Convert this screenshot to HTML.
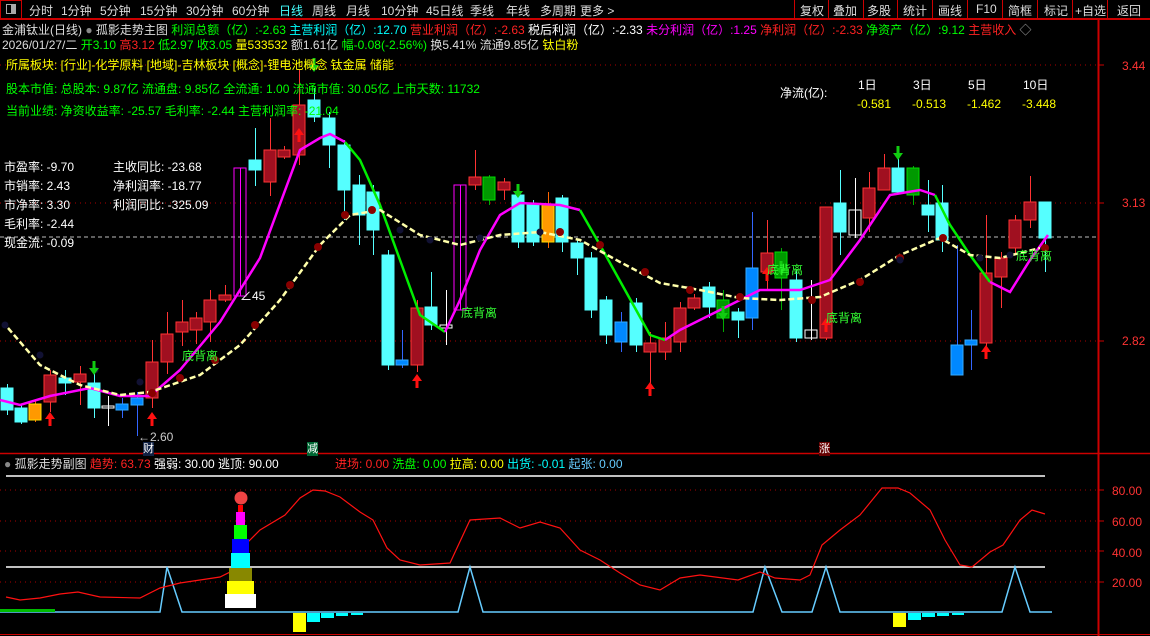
<!DOCTYPE html>
<html><head><meta charset="utf-8"><style>
*{margin:0;padding:0;box-sizing:border-box}
body{width:1150px;height:636px;background:#000;overflow:hidden;position:relative;font-family:"Liberation Sans","Noto Sans CJK SC",sans-serif;font-size:12px;color:#ddd}
.t{position:absolute;white-space:nowrap;line-height:14px}
#top{position:absolute;left:0;top:0;width:1150px;height:19px;border-bottom:1px solid #c00}
#top span{position:absolute;top:2px;font-size:12px;color:#ddd}
.sep{position:absolute;top:0;width:1px;height:19px;background:#c00}
svg{position:absolute;left:0;top:0}
</style></head><body>
<div id="top">
<div style="position:absolute;left:0;top:0;width:22px;height:19px;border:1px solid #c00"></div>
<div style="position:absolute;left:6px;top:4px;width:10px;height:10px;border:1px solid #aaa;background:linear-gradient(90deg,#000 50%,#aaa 50%)"></div>
<span style="left:29px">分时</span><span style="left:61px">1分钟</span><span style="left:100px">5分钟</span><span style="left:140px">15分钟</span><span style="left:186px">30分钟</span><span style="left:232px">60分钟</span><span style="left:279px;color:#4ff">日线</span><span style="left:312px">周线</span><span style="left:346px">月线</span><span style="left:381px">10分钟</span><span style="left:426px">45日线</span><span style="left:470px">季线</span><span style="left:506px">年线</span><span style="left:540px">多周期</span><span style="left:580px">更多 &gt;</span>
<div class="sep" style="left:794px"></div><span style="left:800px">复权</span>
<div class="sep" style="left:828px"></div><span style="left:833px">叠加</span>
<div class="sep" style="left:863px"></div><span style="left:867px">多股</span>
<div class="sep" style="left:897px"></div><span style="left:903px">统计</span>
<div class="sep" style="left:932px"></div><span style="left:938px">画线</span>
<div class="sep" style="left:967px"></div><span style="left:976px">F10</span>
<div class="sep" style="left:1002px"></div><span style="left:1008px">简框</span>
<div class="sep" style="left:1037px"></div><span style="left:1044px">标记</span>
<div class="sep" style="left:1072px"></div><span style="left:1075px">+自选</span>
<div class="sep" style="left:1107px"></div><span style="left:1117px">返回</span>
</div>
<svg width="1150" height="636" id="s"></svg>
<div class="t" style="left:2px;top:23px;color:#ddd">金浦钛业(日线) <span style="color:#888">●</span> 孤影走势主图 <span style="color:#0f0">利润总额（亿）:-2.63</span> <span style="color:#0ff">主营利润（亿）:12.70</span> <span style="color:#f22">营业利润（亿）:-2.63</span> <span style="color:#fff">税后利润（亿）:-2.33</span> <span style="color:#f0f">未分利润（亿）:1.25</span> <span style="color:#f22">净利润（亿）:-2.33</span> <span style="color:#0f0">净资产（亿）:9.12</span> <span style="color:#f22">主营收入</span> <span style="color:#aaa">◇</span></div>
<div class="t" style="left:2px;top:38px;color:#ddd">2026/01/27/二 <span style="color:#0f0">开3.10</span> <span style="color:#f22">高3.12</span> <span style="color:#0f0">低2.97</span> <span style="color:#0f0">收3.05</span> <span style="color:#ff0">量533532</span> 额1.61亿 <span style="color:#0f0">幅-0.08(-2.56%)</span> 换5.41% 流通9.85亿 <span style="color:#ff0">钛白粉</span></div>
<div class="t" style="left:6px;top:58px;color:#ff0">所属板块: [行业]-化学原料 [地域]-吉林板块 [概念]-锂电池概念 钛金属 储能</div>
<div class="t" style="left:6px;top:82px;color:#0f0">股本市值: 总股本: 9.87亿 流通盘: 9.85亿 全流通: 1.00 流通市值: 30.05亿 上市天数: 11732</div>
<div class="t" style="left:6px;top:104px;color:#0f0">当前业绩: 净资收益率: -25.57 毛利率: -2.44 主营利润率: -21.04</div>
<div class="t" style="left:4px;top:158px;color:#fff;line-height:19px">市盈率: -9.70<br>市销率: 2.43<br>市净率: 3.30<br>毛利率: -2.44<br>现金流: -0.09</div>
<div class="t" style="left:113px;top:158px;color:#fff;line-height:19px">主收同比: -23.68<br>净利润率: -18.77<br>利润同比: -325.09</div>
<div class="t" style="left:780px;top:86px;color:#fff">净流(亿):</div>
<div class="t" style="left:858px;top:78px;color:#fff">1日</div><div class="t" style="left:913px;top:78px;color:#fff">3日</div><div class="t" style="left:968px;top:78px;color:#fff">5日</div><div class="t" style="left:1023px;top:78px;color:#fff">10日</div>
<div class="t" style="left:857px;top:97px;color:#ff0">-0.581</div><div class="t" style="left:912px;top:97px;color:#ff0">-0.513</div><div class="t" style="left:967px;top:97px;color:#ff0">-1.462</div><div class="t" style="left:1022px;top:97px;color:#ff0">-3.448</div>
<div class="t" style="left:1122px;top:59px;color:#f33">3.44</div>
<div class="t" style="left:1122px;top:196px;color:#f33">3.13</div>
<div class="t" style="left:1122px;top:334px;color:#f33">2.82</div>
<div class="t" style="left:4px;top:457px;color:#ddd"><span style="color:#888">●</span> 孤影走势副图 <span style="color:#f22">趋势: 63.73</span> <span style="color:#fff">强弱: 30.00 逃顶: 90.00</span></div>
<div class="t" style="left:335px;top:457px"><span style="color:#f22">进场: 0.00</span> <span style="color:#0f0">洗盘: 0.00</span> <span style="color:#ff0">拉高: 0.00</span> <span style="color:#0ff">出货: -0.01</span> <span style="color:#6cf">起张: 0.00</span></div>
<div class="t" style="left:1112px;top:484px;color:#f33">80.00</div>
<div class="t" style="left:1112px;top:515px;color:#f33">60.00</div>
<div class="t" style="left:1112px;top:546px;color:#f33">40.00</div>
<div class="t" style="left:1112px;top:576px;color:#f33">20.00</div>
<div class="t" style="left:182px;top:349px;color:#3f3">底背离</div>
<div class="t" style="left:461px;top:306px;color:#3f3">底背离</div>
<div class="t" style="left:767px;top:263px;color:#3f3">底背离</div>
<div class="t" style="left:826px;top:311px;color:#3f3">底背离</div>
<div class="t" style="left:1016px;top:249px;color:#3f3">底背离</div>
<div class="t" style="left:240px;top:289px;color:#fff">∠45</div>
<div class="t" style="left:138px;top:430px;color:#ccc">←2.60</div>
<div class="t" style="left:143px;top:442px;color:#fff;background:#124;font-size:11px">财</div>
<div class="t" style="left:307px;top:442px;color:#fff;background:#063;font-size:11px">减</div>
<div class="t" style="left:819px;top:442px;color:#fff;background:#600;font-size:11px">涨</div>
<script>
var s=document.getElementById('s'),h='';
function L(x1,y1,x2,y2,c,w,d){h+='<line x1="'+x1+'" y1="'+y1+'" x2="'+x2+'" y2="'+y2+'" stroke="'+c+'" stroke-width="'+(w||1)+'"'+(d?' stroke-dasharray="'+d+'"':'')+'/>';}
function R(x,y,w,hh,f,st){h+='<rect x="'+x+'" y="'+y+'" width="'+w+'" height="'+hh+'" fill="'+f+'"'+(st?' stroke="'+st+'"':'')+'/>';}
function P(pts,c,w,d){h+='<polyline fill="none" points="'+pts+'" stroke="'+c+'" stroke-width="'+w+'"'+(d?' stroke-dasharray="'+d+'"':'')+'/>';}
L(1098.5,19,1098.5,636,'#c00',2);L(0,19.5,1150,19.5,'#c00');L(0,453.5,1150,453.5,'#c00',1.5);L(0,634.5,1150,634.5,'#c00');
L(1098,65,1104,65,'#c00');L(1098,203,1104,203,'#c00');L(1098,341,1104,341,'#c00');
L(0,65,1098,65,'#a00',1,'1,4');L(0,203,1098,203,'#a00',1,'1,4');L(0,341,1098,341,'#a00',1,'1,4');
L(0,237,1098,237,'#bbb',1,'4,3');
var C=[[7,388,410,384,415,'c'],[21,408,422,404,424,'c'],[35,404,420,400,422,'o'],[50,375,402,370,412,'r'],[65,378,383,370,395,'c'],[80,374,382,366,405,'r'],[94,383,408,370,418,'c'],[108,406,408,396,426,'w'],[122,404,410,398,418,'b'],[137,398,405,392,436,'b'],[152,362,398,340,408,'r'],[167,334,362,312,374,'r'],[182,322,332,300,346,'r'],[196,318,330,312,344,'r'],[210,300,322,290,342,'r'],[225,295,300,285,302,'r'],[240,168,296,168,296,'m'],[255,160,170,128,186,'c'],[270,150,182,118,196,'r'],[284,150,157,146,159,'r'],[299,105,155,70,165,'r'],[314,100,117,88,122,'c'],[329,118,145,112,168,'c'],[344,145,190,140,220,'c'],[359,185,215,175,245,'c'],[373,192,230,185,255,'c'],[388,255,365,250,370,'c'],[402,360,365,330,368,'b'],[417,308,365,300,372,'r'],[431,307,325,272,330,'c'],[446,325,328,290,345,'w'],[460,185,310,185,310,'m'],[475,177,185,150,190,'r'],[489,177,200,175,205,'g'],[504,182,190,178,200,'r'],[518,195,242,190,248,'c'],[533,205,242,200,246,'c'],[548,205,242,192,248,'o'],[562,198,242,195,252,'c'],[577,243,258,240,275,'c'],[591,258,310,252,318,'c'],[606,300,335,296,344,'c'],[621,322,342,312,352,'b'],[636,303,345,298,352,'c'],[650,343,352,332,385,'r'],[665,338,352,322,360,'r'],[680,308,342,302,352,'r'],[694,298,308,294,310,'r'],[709,287,307,282,318,'c'],[723,300,318,290,332,'g'],[738,312,320,308,338,'c'],[752,268,318,212,330,'b'],[767,253,272,220,290,'r'],[781,252,278,248,310,'g'],[796,280,338,270,342,'c'],[811,330,338,280,340,'w'],[826,207,338,207,340,'r'],[840,203,232,170,255,'c'],[855,210,235,178,238,'w'],[869,188,218,172,232,'r'],[884,168,190,154,190,'r'],[898,168,192,146,192,'c'],[913,168,195,166,205,'g'],[928,205,215,180,232,'c'],[942,203,240,185,252,'c'],[957,345,375,245,375,'b'],[971,340,345,310,370,'b'],[986,273,343,215,350,'r'],[1001,258,277,252,308,'r'],[1015,220,248,215,255,'r'],[1030,202,220,176,228,'r'],[1045,202,238,202,272,'c']];
var col={c:['#5ff','#5ff','#5ff'],r:['#a01020','#f33','#f33'],o:['#f90','#fd0','#f60'],b:['#08f','#3af','#36f'],g:['#090','#0d0','#0a0'],w:['none','#fff','#fff'],m:['none','#f0f','#f0f']};
C.forEach(function(k){var c=col[k[5]];L(k[0]+.5,k[3],k[0]+.5,k[4],c[2]);R(k[0]-6,k[1],12,Math.max(2,k[2]-k[1]),c[0],c[1]);});
P('0,400 20,405 50,396 90,388 120,396 150,396 180,370 220,322 260,258 300,150 320,138 330,134 345,142','#f0f',2.5);
P('345,142 360,160 380,205 400,260 420,315 445,332','#0e0',2.5);
P('445,332 460,300 480,250 500,215 520,203 560,205 580,210','#f0f',2.5);
P('580,210 600,245 625,290 650,335 665,340','#0e0',2.5);
P('665,340 680,330 720,310 760,290 800,290 830,280 860,240 890,195 920,190 935,195','#f0f',2.5);
P('935,195 950,225 970,255 990,282','#0e0',2.5);
P('990,282 1010,292 1030,260 1048,235','#f0f',2.5);
P('8,328 40,365 80,385 120,395 150,392 200,375 240,345 280,300 320,245 350,215 380,210 420,235 460,245 500,235 540,232 580,240 620,262 660,283 700,290 740,298 780,300 820,297 860,280 900,255 940,238 970,255 1000,258 1040,248','#ffa',2.5,'6,3');
[[152,393],[180,378],[215,360],[255,325],[290,285],[318,247],[345,215],[372,210],[560,232],[600,245],[645,272],[690,290],[740,297],[812,300],[860,282],[900,258],[943,238],[1045,248]].forEach(function(p){h+='<circle cx="'+p[0]+'" cy="'+p[1]+'" r="4" fill="#800"/>';});
[[5,325],[40,355],[95,370],[140,382],[400,230],[430,240],[480,238],[540,232],[900,260],[980,258],[1010,255]].forEach(function(p){h+='<circle cx="'+p[0]+'" cy="'+p[1]+'" r="3.5" fill="#113"/>';});
function up(x,y){h+='<path d="M'+x+' '+y+' l-5 7 h3.5 v7 h3 v-7 h3.5z" fill="#f11"/>';}
function dn(x,y){h+='<path d="M'+x+' '+y+' l-5 -7 h3.5 v-7 h3 v7 h3.5z" fill="#1c1"/>';}
[[50,412],[152,412],[299,128],[417,374],[650,382],[767,267],[826,318],[986,345]].forEach(function(a){up(a[0],a[1]);});
[[94,375],[314,72],[518,198],[723,320],[781,275],[898,160]].forEach(function(a){dn(a[0],a[1]);});
L(6,476,1045,476,'#fff',1.5);L(6,567,1045,567,'#fff',1.5);
[490,521,551,582].forEach(function(y){L(0,y,1098,y,'#a00',1,'1,4');L(1098,y,1104,y,'#c00');});
P('0,612 160,612 167,567 182,612 458,612 470,567 483,612 753,612 765,567 782,612 812,612 826,567 840,612 1002,612 1015,567 1030,612 1052,612','#6cf',1.5);
P('6,597 20,600 40,598 60,594 78,592 100,597 140,598 160,588 180,583 200,580 220,577 232,571 245,545 260,530 285,515 300,498 313,490 325,491 340,497 360,512 373,520 387,548 400,560 420,565 450,563 470,520 500,518 520,528 540,522 560,528 580,550 600,560 620,573 640,585 660,590 680,578 700,575 738,580 760,572 775,578 800,580 810,575 822,545 840,530 860,515 882,488 898,488 910,493 930,510 945,540 960,565 972,567 990,552 1003,545 1020,520 1032,510 1045,514','#f11',1.2);
R(225,594,31,14,'#fff');R(227,581,27,13,'#ff0');R(229,568,23,13,'#880');R(231,553,19,15,'#0ff');R(232,539,17,14,'#00f');R(234,525,13,14,'#0f0');R(236,512,9,13,'#f0f');R(238,505,5,7,'#f00');
h+='<circle cx="241" cy="498" r="6.5" fill="#e44"/>';
R(293,613,13,19,'#ff0');R(307,613,13,9,'#0ff');R(321,613,13,5,'#0ff');R(336,613,12,3,'#0ff');R(351,613,12,2,'#0ff');
R(893,613,13,14,'#ff0');R(908,613,13,7,'#0ff');R(922,613,13,4,'#0ff');R(937,613,12,3,'#0ff');R(952,613,12,2,'#0ff');
R(0,609,55,3,'#0b0');
s.innerHTML=h;
</script>
</body></html>
